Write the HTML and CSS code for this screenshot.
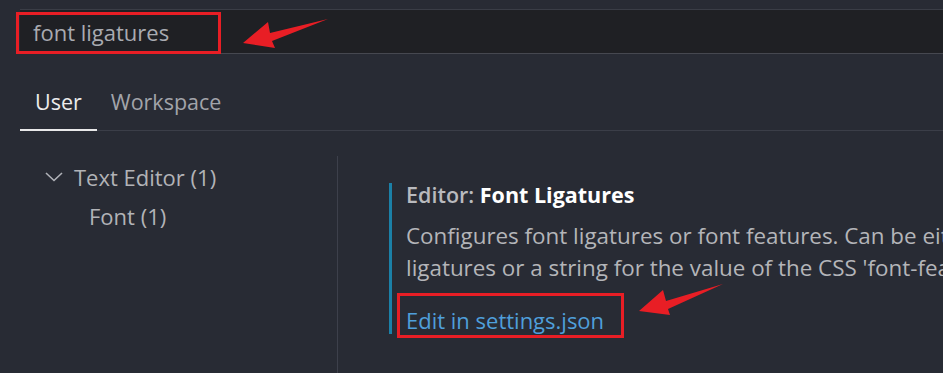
FILE: index.html
```html
<!DOCTYPE html>
<html lang="en">
<head>
    <meta charset="UTF-8">
    <title>Settings - font ligatures</title>
    <link rel="stylesheet" href="styles.css">
</head>
<body>
    <div class="search-bar">
        <span class="search-text">font ligatures</span>
    </div>

    <div class="tabs">
        <div class="tab active">User</div>
        <div class="tab">Workspace</div>
    </div>

    <div class="settings-body">
        <div class="toc">
            <div class="toc-row">
                <svg class="chevron" width="18" height="10" viewBox="0 0 18 10">
                    <polyline points="1,1 9,8.5 17,1" fill="none" stroke="#b0b2b8" stroke-width="1.6"/>
                </svg>
                <span>Text Editor (1)</span>
            </div>
            <div class="toc-row child">Font (1)</div>
        </div>

        <div class="settings-list">
            <div class="setting-item">
                <div class="setting-title">
                    <span class="category">Editor: </span><span class="label">Font Ligatures</span>
                </div>
                <div class="setting-desc">
                    <span class="desc-line">Configures font ligatures or font features. Can be either a boolean to enable/disable</span>
                    <span class="desc-line">ligatures or a string for the value of the CSS 'font-feature-settings' property.</span>
                </div>
                <a class="setting-link" href="#">Edit in settings.json</a>
            </div>
        </div>
    </div>

    <!-- screenshot annotations -->
    <svg class="annotations" width="943" height="373" viewBox="0 0 943 373">
        <rect x="17.5" y="13.5" width="202" height="39" fill="none" stroke="#e81e25" stroke-width="3"/>
        <rect x="398.5" y="294.5" width="224" height="42" fill="none" stroke="#e81e25" stroke-width="3"/>
        <polygon points="243,43 268,22 270,33 328,19 272,41 275,48" fill="#e81e25"/>
        <polygon points="639,311 663,290 666,301 723,284 668,309 670,315" fill="#e81e25"/>
    </svg>
</body>
</html>
```

FILE: styles.css
```css
body {
    margin: 0;
    background-color: #282b34;
    font-family: "Open Sans", "Noto Sans", sans-serif;
    font-size: 22px;
    color: #b4b5b9;
    overflow: hidden;
    width: 943px;
    height: 373px;
    position: relative;
}
.search-bar {
    margin: 9px 0 0 20px;
    height: 43px;
    background-color: #1f2024;
    border-top: 1px solid #3a3d46;
    border-bottom: 1px solid #464850;
    padding-left: 13px;
    line-height: 45px;
}
.search-text {
    color: #a9abb1;
}
.tabs {
    display: flex;
    margin-left: 20px;
    height: 76px;
    border-bottom: 1px solid #3b3e48;
}
.tab {
    padding: 34px 15px 13px 15px;
    line-height: 28px;
    border-bottom: 2px solid transparent;
    margin-bottom: -1px;
    color: #a2a4aa;
    font-size: 21.5px;
}
.tab.active {
    color: #ececec;
    border-bottom-color: #e8e8e8;
}
.tab + .tab {
    padding-left: 14px;
}
.settings-body {
    display: flex;
    margin-top: 25px;
    height: 217px;
}
.toc {
    flex: 0 0 auto;
    width: 292px;
    padding: 1px 0 0 45px;
}
.toc-row {
    display: flex;
    align-items: center;
    height: 39px;
    gap: 11px;
    color: #b2b3b7;
    white-space: nowrap;
}
.toc-row.child {
    padding-left: 44px;
}
.settings-list {
    flex: 1;
    min-width: 0;
    overflow: hidden;
    border-left: 1px solid #3d404b;
    padding: 27px 0 0 51px;
    white-space: nowrap;
}
.setting-item {
    border-left: 3px solid #1b80a7;
    padding-left: 14px;
}
.setting-title {
    line-height: 24px;
    font-size: 21.5px;
    font-weight: 600;
}
.category {
    color: #b9babe;
}
.label {
    color: #ffffff;
    font-weight: 700;
}
.setting-desc {
    margin-top: 13px;
    line-height: 32px;
    font-size: 22.4px;
}
.desc-line {
    display: block;
}
.setting-link {
    display: block;
    margin-top: 22px;
    line-height: 28px;
    color: #4f9fdb;
    text-decoration: none;
}
.annotations {
    position: absolute;
    left: 0;
    top: 0;
}
```
